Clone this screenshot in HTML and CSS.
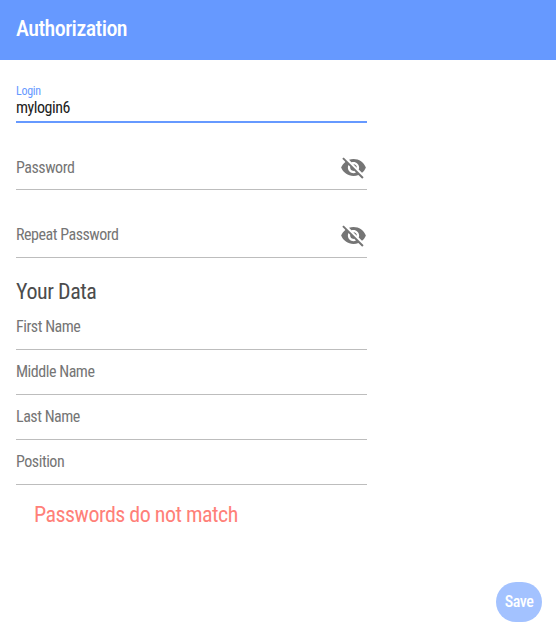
FILE: index.html
```html
<!DOCTYPE html>
<html lang="en">
<head>
    <meta charset="UTF-8">
    <meta name="viewport" content="width=device-width, initial-scale=1.0">
    <title>Authorization</title>
    <link rel="stylesheet" href="styles.css">
</head>
<body>
    <header class="toolbar">
        <h1 class="toolbar-title">Authorization</h1>
    </header>

    <form class="form">
        <div class="field field-login focused">
            <label for="login">Login</label>
            <input type="text" id="login" value="mylogin6">
        </div>

        <div class="field field-password">
            <input type="password" id="password" placeholder="Password" aria-label="Password">
            <button type="button" class="toggle" aria-label="Show password">
                <svg viewBox="0 0 24 24"><path d="M12 7c2.76 0 5 2.24 5 5 0 .65-.13 1.26-.36 1.83l2.92 2.92c1.51-1.26 2.7-2.89 3.43-4.75-1.73-4.39-6-7.5-11-7.5-1.4 0-2.74.25-3.98.7l2.16 2.16C10.74 7.13 11.35 7 12 7zM2 4.27l2.28 2.28.46.46C3.08 8.3 1.78 10.02 1 12c1.73 4.39 6 7.5 11 7.5 1.55 0 3.03-.3 4.38-.84l.42.42L19.73 22 21 20.73 3.27 3 2 4.27zM7.53 9.8l1.55 1.55c-.05.21-.08.43-.08.65 0 1.66 1.34 3 3 3 .22 0 .44-.03.65-.08l1.55 1.55c-.67.33-1.41.53-2.2.53-2.76 0-5-2.24-5-5 0-.79.2-1.53.53-2.2zm4.31-.78l3.15 3.15.02-.16c0-1.66-1.34-3-3-3l-.17.01z"/></svg>
            </button>
        </div>

        <div class="field field-password field-repeat">
            <input type="password" id="repeat" placeholder="Repeat Password" aria-label="Repeat Password">
            <button type="button" class="toggle" aria-label="Show password">
                <svg viewBox="0 0 24 24"><path d="M12 7c2.76 0 5 2.24 5 5 0 .65-.13 1.26-.36 1.83l2.92 2.92c1.51-1.26 2.7-2.89 3.43-4.75-1.73-4.39-6-7.5-11-7.5-1.4 0-2.74.25-3.98.7l2.16 2.16C10.74 7.13 11.35 7 12 7zM2 4.27l2.28 2.28.46.46C3.08 8.3 1.78 10.02 1 12c1.73 4.39 6 7.5 11 7.5 1.55 0 3.03-.3 4.38-.84l.42.42L19.73 22 21 20.73 3.27 3 2 4.27zM7.53 9.8l1.55 1.55c-.05.21-.08.43-.08.65 0 1.66 1.34 3 3 3 .22 0 .44-.03.65-.08l1.55 1.55c-.67.33-1.41.53-2.2.53-2.76 0-5-2.24-5-5 0-.79.2-1.53.53-2.2zm4.31-.78l3.15 3.15.02-.16c0-1.66-1.34-3-3-3l-.17.01z"/></svg>
            </button>
        </div>

        <h2 class="section-title">Your Data</h2>

        <div class="field">
            <input type="text" placeholder="First Name" aria-label="First Name">
        </div>
        <div class="field">
            <input type="text" placeholder="Middle Name" aria-label="Middle Name">
        </div>
        <div class="field">
            <input type="text" placeholder="Last Name" aria-label="Last Name">
        </div>
        <div class="field">
            <input type="text" placeholder="Position" aria-label="Position">
        </div>

        <p class="error">Passwords do not match</p>

        <button type="submit" class="save" disabled>Save</button>
    </form>
</body>
</html>
```

FILE: styles.css
```css
* {
    box-sizing: border-box;
}
body {
    margin: 0;
    height: 638px;
    background: #fff;
    font-family: Roboto, "Liberation Sans", sans-serif;
    font-stretch: 75%;
    overflow: hidden;
}
.toolbar {
    height: 60px;
    padding: 0 16px;
    display: flex;
    align-items: center;
    background: #6699ff;
}
.toolbar-title {
    margin: 0;
    padding-bottom: 4px;
    font-size: 22px;
    font-weight: 500;
    letter-spacing: -0.55px;
    color: #fff;
}
.form {
    height: 578px;
    padding: 0 14px 16px 16px;
    display: flex;
    flex-direction: column;
}
.field {
    width: 351px;
    height: 45px;
    display: flex;
    align-items: flex-start;
    border-bottom: 1px solid #bdbdbd;
}
.field input {
    flex: 1;
    min-width: 0;
    height: 20px;
    margin-top: 12px;
    padding: 0;
    border: none;
    outline: none;
    background: none;
    font: inherit;
    font-size: 16px;
    letter-spacing: -0.47px;
    line-height: 20px;
    color: #212121;
}
.field input::placeholder {
    color: #757575;
    opacity: 1;
}
.field-login {
    height: 63px;
    flex-direction: column;
}
.field-login label {
    margin-top: 24px;
    height: 14px;
    font-size: 12px;
    letter-spacing: -0.3px;
    line-height: 14px;
    color: #6699ff;
}
.field-login input {
    flex: none;
    width: 100%;
    margin-top: 0;
}
.focused {
    border-bottom: 2px solid #6699ff;
}
.field-password {
    height: 67px;
}
.field-password input {
    margin-top: 35px;
}
.field-repeat {
    height: 68px;
}
.toggle {
    width: 27px;
    height: 27px;
    margin-top: 31px;
    padding: 0;
    border: none;
    background: none;
}
.field-repeat .toggle {
    margin-top: 32px;
}
.toggle svg {
    display: block;
    width: 27px;
    height: 27px;
    fill: #757575;
}
.section-title {
    height: 47px;
    margin: 0;
    padding-top: 20px;
    font-size: 22px;
    font-weight: 400;
    letter-spacing: -0.45px;
    line-height: 28px;
    color: #4c4c4c;
}
.error {
    margin: 16px 0 0 18px;
    font-size: 22px;
    letter-spacing: -0.52px;
    line-height: 28px;
    color: #ff8078;
}
.save {
    width: 46px;
    height: 40px;
    margin-top: auto;
    margin-left: auto;
    padding: 0 0 2px;
    border: none;
    border-radius: 20px;
    background: #a3c2ff;
    font: inherit;
    font-size: 16px;
    font-weight: 500;
    letter-spacing: -0.5px;
    color: #fff;
}
```
